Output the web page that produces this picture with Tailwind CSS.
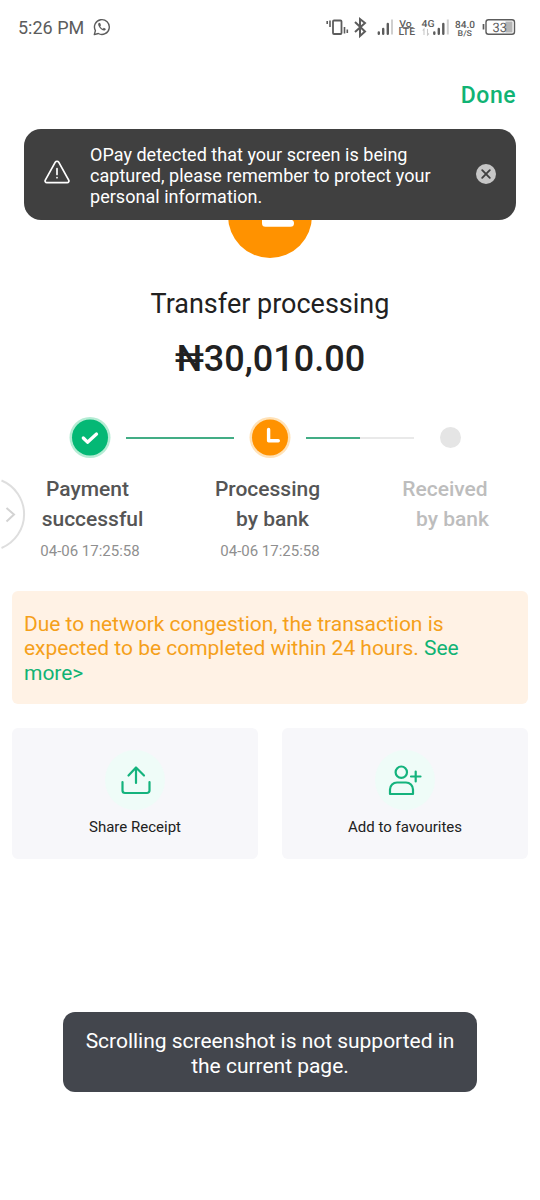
<!DOCTYPE html>
<html lang="en">
<head>
<meta charset="utf-8">
<title>Transfer processing</title>
<script src="https://cdn.jsdelivr.net/npm/@tailwindcss/browser@4"></script>
</head>
<body class="bg-white">
<div class="relative flex h-[1200px] w-[540px] flex-col overflow-hidden bg-white font-['Roboto',sans-serif] text-[#212121]">

  <!-- Status bar -->
  <header class="flex h-14 shrink-0 items-center justify-between pr-[22px] pl-[18px] text-[#5c5c5c]">
    <div class="flex items-center gap-[9px]">
      <span class="text-[18px] leading-6 whitespace-nowrap">5:26 PM</span>
      <svg class="-mt-0.5" width="18" height="18" viewBox="0 0 18 18" fill="none" stroke="currentColor" stroke-width="1.4">
        <path d="M1.3 16.6l1.1-4A7.4 7.4 0 1 1 5.3 15.500z" stroke-linejoin="round"/>
        <path d="M6 4.800c-1.300.9-1 2.600.3 4.400s3 3.200 4.700 3.300c1 0 1.800-.6 1.900-1.500l-2-1.200-1 1C8.600 10.300 7.700 9.300 7.200 8.200l.8-.9-.9-2.300z" fill="currentColor" stroke="none"/>
      </svg>
    </div>
    <svg class="-mt-0.5" width="192" height="26" viewBox="325 14 192 26" fill="none" stroke="currentColor" font-family="Roboto, sans-serif" text-rendering="geometricPrecision">
      <rect x="332" y="20.500" width="8.500" height="13.500" rx="1" stroke-width="1.800"/>
      <path d="M326.200 21v3M329 20.500v6.500M343.500 27v6.500M346.300 29.500v3.500" stroke-width="1.600"/>
      <path d="M354 22l10 9.500-5 4.500v-17l5 4-10 9" stroke-width="2"/>
      <path d="M377.800 32.500v1.200M382.200 29v4.700M386.800 24v9.700" stroke-width="2.400" stroke-linecap="round"/>
      <path d="M391 19.500v15" stroke="#cfcfcf" stroke-width="2"/>
      <g fill="currentColor" stroke="none" font-weight="500">
        <text x="398.300" y="26.500" font-size="9.500" textLength="12.500" lengthAdjust="spacingAndGlyphs">Vo</text>
        <text x="397.500" y="35.300" font-size="10" textLength="16.500" lengthAdjust="spacingAndGlyphs">LTE</text>
        <text x="420.500" y="27" font-size="9.800" textLength="13" lengthAdjust="spacingAndGlyphs">4G</text>
        <text x="454" y="27.800" font-size="10" textLength="20" lengthAdjust="spacingAndGlyphs">84.0</text>
        <text x="456.500" y="36.300" font-size="8" textLength="14.500" lengthAdjust="spacingAndGlyphs">B/S</text>
      </g>
      <path d="M398 27.500h14.500" stroke-width=".8"/>
      <path d="M423 35v-6l-1.300 1.500M426.500 29v6l1.500-1.500" stroke="#c8c8c8" stroke-width="1.100"/>
      <path d="M433.300 32.500v1.200M437.800 29v4.700M442.300 24v9.700" stroke-width="2.400" stroke-linecap="round"/>
      <path d="M446.800 19.500v15" stroke="#cfcfcf" stroke-width="2"/>
      <rect x="485" y="19.700" width="28.500" height="14.600" rx="2.500" stroke-width="1.400"/>
      <rect x="504.500" y="21.500" width="7" height="11" fill="#b5b5b5" stroke="none"/>
      <path d="M482.500 24v5.500" stroke-width="1.700"/>
      <text x="491.500" y="31.700" font-size="13" fill="currentColor" stroke="none" textLength="14.500" lengthAdjust="spacingAndGlyphs">33</text>
    </svg>
  </header>

  <nav class="flex h-[118px] shrink-0 justify-end pt-[25px] pr-6">
    <a class="text-[23px] leading-[30px] font-medium tracking-[0.5px] text-[#10b374]">Done</a>
  </nav>

  <!-- Transfer summary -->
  <section class="flex h-[243px] shrink-0 flex-col items-center">
    <svg width="84" height="84" viewBox="0 0 84 84"><circle cx="42" cy="42" r="42" fill="#ff9200"/><path d="M37.500 20v29.300h25" fill="none" stroke="#fff" stroke-width="7" stroke-linejoin="round" stroke-linecap="round"/></svg>
    <h1 class="mt-[28px] text-[27px] leading-9 whitespace-nowrap">Transfer processing</h1>
    <p class="mt-4 text-[36px] leading-[42px] font-medium whitespace-nowrap">₦30,010.00</p>
  </section>

  <!-- Progress steps -->
  <section class="grid h-[174px] shrink-0 grid-cols-3">
    <div class="relative flex flex-col items-center text-[#555]">
      <svg width="42" height="42" viewBox="0 0 42 42"><circle cx="21" cy="20.500" r="20.500" fill="#b5ecd4"/><circle cx="21" cy="20.500" r="18" fill="#04b875"/><path d="M14.300 21l4.200 4.200 9-8.200" fill="none" stroke="#fff" stroke-width="3.300" stroke-linecap="round" stroke-linejoin="round"/></svg>
      <span class="absolute top-[20px] left-[126px] h-[2px] w-[108px] bg-[#43ad85]"></span>
      <span class="mt-[15px] mr-[5px] text-[21px] leading-[30px] font-medium">Payment</span>
      <span class="ml-[5px] text-[21px] leading-[30px] font-medium">successful</span>
      <time class="mt-[7px] text-[15px] leading-5 whitespace-nowrap text-[#8f8f8f]">04-06 17:25:58</time>
    </div>
    <div class="relative flex flex-col items-center text-[#555]">
      <svg width="42" height="42" viewBox="0 0 42 42"><circle cx="21" cy="20.500" r="20.500" fill="#ffe2b8"/><circle cx="21" cy="20.500" r="18" fill="#ff9200"/><path d="M19.600 12.500v11.200h9.700" fill="none" stroke="#fff" stroke-width="3.400" stroke-linecap="round" stroke-linejoin="round"/></svg>
      <span class="absolute top-[20px] left-[126px] flex h-[2px] w-[108px] bg-[#e9e9e9]"><span class="w-1/2 bg-[#43ad85]"></span></span>
      <span class="mt-[15px] mr-[5px] text-[21px] leading-[30px] font-medium">Processing</span>
      <span class="ml-[5px] text-[21px] leading-[30px] font-medium">by bank</span>
      <time class="mt-[7px] text-[15px] leading-5 whitespace-nowrap text-[#8f8f8f]">04-06 17:25:58</time>
    </div>
    <div class="flex flex-col items-center text-[#bdbdbd]">
      <div class="flex h-[41px] items-center"><span class="size-[21px] rounded-full bg-[#e5e5e5]"></span></div>
      <span class="mt-[16px] mr-[10px] text-[21px] leading-[30px] font-medium">Received</span>
      <span class="ml-[5px] text-[21px] leading-[30px] font-medium">by bank</span>
    </div>
  </section>

  <p class="mx-3 h-[113px] shrink-0 rounded-md bg-[#fff2e5] px-3 pt-[20.500px] text-[21px] leading-[24.500px] tracking-[-0.02px] whitespace-nowrap text-[#f5a01a]">Due to network congestion, the transaction is<br>expected to be completed within 24 hours. <a class="text-[#10b374]">See<br>more&gt;</a></p>

  <!-- Actions -->
  <section class="mx-3 mt-6 grid h-[131px] shrink-0 grid-cols-2 gap-6 text-[15px] leading-5">
    <button class="flex flex-col items-center rounded-md bg-[#f7f7fa] pt-[22px]">
      <svg width="60" height="60" viewBox="0 0 60 60" fill="none" stroke="#14b37d" stroke-width="2.200" stroke-linecap="round" stroke-linejoin="round"><circle cx="30" cy="30" r="30" fill="#effcf8" stroke="none"/><path d="M31 33V17.500M23.500 25.500l7.500-8 8 8M17.500 32v8.500a2.500 2.500 0 0 0 2.500 2.500h22a2.500 2.500 0 0 0 2.500-2.500V32"/></svg>
      <span class="mt-[7px]">Share Receipt</span>
    </button>
    <button class="flex flex-col items-center rounded-md bg-[#f7f7fa] pt-[22px]">
      <svg width="60" height="60" viewBox="0 0 60 60" fill="none" stroke="#14b37d" stroke-width="2.200" stroke-linecap="round" stroke-linejoin="round"><circle cx="30" cy="30" r="30" fill="#effcf8" stroke="none"/><circle cx="26.300" cy="22.200" r="5.700"/><path d="M15 44v-4.500a7 7 0 0 1 7-7h9a7 7 0 0 1 7 7V44zM36 26.500h9.500M40.700 21.500v10"/></svg>
      <span class="mt-[7px]">Add to favourites</span>
    </button>
  </section>

  <!-- Toast -->
  <div class="mx-auto mt-[153px] h-[80px] w-[414px] shrink-0 rounded-xl bg-[#43464d] pt-[17px] text-center text-[21px] leading-[24.500px] tracking-[-0.02px] whitespace-nowrap text-white">Scrolling screenshot is not supported in<br>the current page.</div>

  <!-- Screen capture alert -->
  <div class="absolute top-[129px] left-6 flex h-[90.500px] w-[492px] items-center rounded-[17px] bg-[#404040] pl-5 pr-5 text-white">
    <svg class="-mt-1 shrink-0" width="26" height="24" viewBox="0 0 26 24" fill="none" stroke="currentColor" stroke-width="1.700" stroke-linecap="round" stroke-linejoin="round"><path d="M11.300 2.200 1.300 20.200a1.700 1.700 0 0 0 1.500 2.500h20.400a1.700 1.700 0 0 0 1.500-2.500l-10-18a2 2 0 0 0-3.400 0z"/><path d="M13 8.500v6M13 17.500v.2"/></svg>
    <p class="ml-5 pt-[3px] text-[18px] leading-[21px] tracking-[0.03px] whitespace-nowrap">OPay detected that your screen is being<br>captured, please remember to protect your<br>personal information.</p>
    <svg class="ml-auto shrink-0" width="20" height="20" viewBox="0 0 20 20"><circle cx="10" cy="10" r="10" fill="#c6c6c6"/><path d="M6.200 6.200l7.600 7.600M13.800 6.200l-7.600 7.600" stroke="#404040" stroke-width="1.900" stroke-linecap="round"/></svg>
  </div>

  <!-- Edge handle -->
  <svg class="absolute top-[476px] left-0" width="28" height="76" viewBox="0 0 28 76" fill="none"><path d="M1.500 4.500A36.500 36.500 0 0 1 1.500 72" stroke="#dedede" stroke-width="2"/><path d="M6.500 32l7.500 6.500-7.500 7" stroke="#d3d3d3" stroke-width="2"/></svg>
</div>
</body>
</html>
